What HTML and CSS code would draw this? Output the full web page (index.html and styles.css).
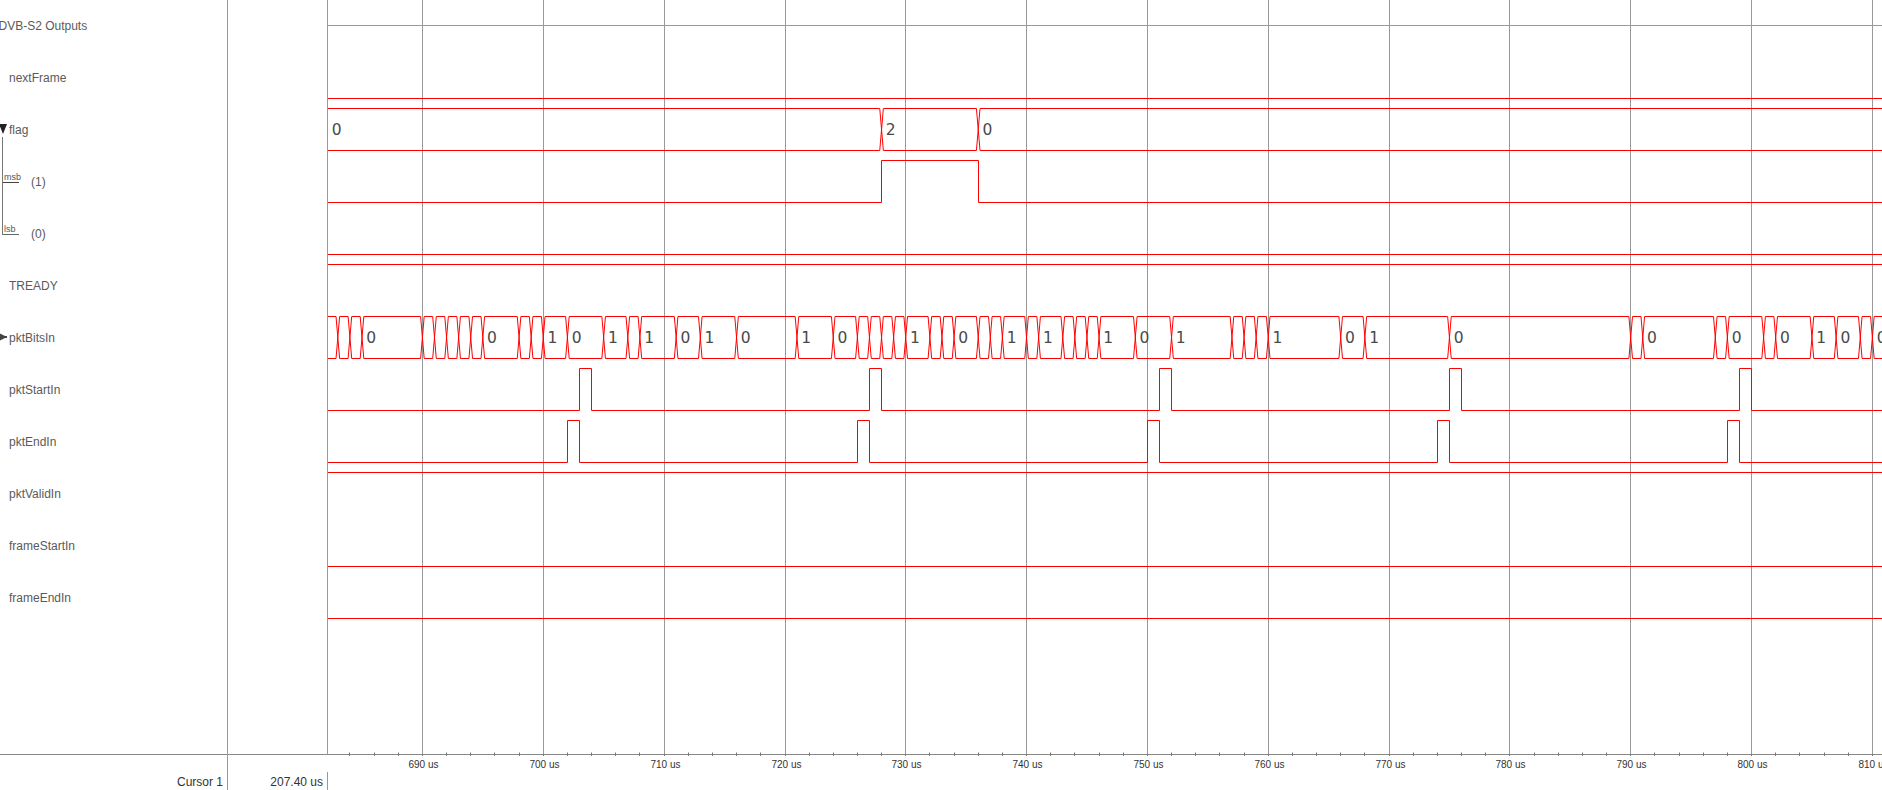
FILE: index.html
```html
<!DOCTYPE html>
<html lang="en">
<head>
<meta charset="utf-8">
<title>Waveform viewer</title>
<link rel="stylesheet" href="styles.css">
</head>
<body>
<div class="viewer">
  <div class="col-names">
    <div class="names">
      <div class="row group"><span class="name">DVB-S2 Outputs</span></div>
      <div class="row"><span class="name">nextFrame</span></div>
      <div class="row">
        <svg class="twisty twisty-open" viewBox="0 0 8 10"><path d="M0 0H8L4 10Z"/></svg>
        <span class="name">flag</span>
      </div>
      <div class="row bit"><span class="name">(1)</span></div>
      <div class="row bit"><span class="name">(0)</span></div>
      <div class="row"><span class="name">TREADY</span></div>
      <div class="row">
        <svg class="twisty twisty-closed" viewBox="0 0 8 8"><path d="M0 0L6 3H8V5H6L0 8Z"/></svg>
        <span class="name">pktBitsIn</span>
      </div>
      <div class="row"><span class="name">pktStartIn</span></div>
      <div class="row"><span class="name">pktEndIn</span></div>
      <div class="row"><span class="name">pktValidIn</span></div>
      <div class="row"><span class="name">frameStartIn</span></div>
      <div class="row"><span class="name">frameEndIn</span></div>
      <div class="tree">
        <div class="branch branch-msb">msb</div>
        <div class="branch branch-lsb">lsb</div>
      </div>
    </div>
    <div class="cursor-name">Cursor 1</div>
  </div>
  <div class="col-values">
    <div class="values"></div>
    <div class="cursor-value">207.40 us</div>
  </div>
  <svg id="wave" class="wave" viewBox="328 0 1554 790" width="1554" height="790"></svg>
</div>
<script src="wave.js"></script>
</body>
</html>
```
FILE: styles.css
```css
html, body {
  margin: 0;
  padding: 0;
  height: 100%;
  background: #fff;
  overflow: hidden;
}
.viewer {
  display: flex;
  height: 790px;
  font-family: "Liberation Sans", Arial, sans-serif;
  font-size: 12px;
}
.col-names {
  width: 228px;
  flex: none;
  display: flex;
  flex-direction: column;
  box-sizing: border-box;
  border-right: 1px solid #999;
}
.names {
  position: relative;
  height: 755px;
  flex: none;
  box-sizing: border-box;
  border-bottom: 1px solid #888;
  overflow: hidden;
}
.row {
  display: flex;
  align-items: center;
  height: 52px;
  padding-left: 9px;
  position: relative;
  color: #5a5a5a;
  white-space: nowrap;
}
.group { padding-left: 0; }
.group .name { margin-left: -1.5px; }
.bit { padding-left: 31px; }
.twisty {
  position: absolute;
  left: -1px;
}
.twisty-open { width: 8px; height: 10px; top: 20px; fill: #222; }
.twisty-closed { width: 8px; height: 8px; top: 21px; fill: #444; }
.tree {
  position: absolute;
  left: 2px;
  top: 137px;
  width: 16px;
  display: flex;
  flex-direction: column;
  border-left: 1px solid #777;
  font-size: 9px;
  color: #555;
}
.branch {
  display: flex;
  align-items: flex-end;
  box-sizing: border-box;
  padding-left: 1px;
  line-height: 9px;
}
.branch-msb { height: 46px; border-bottom: 1px solid #444; }
.branch-lsb { height: 52px; border-bottom: 1px solid #666; }
.cursor-name {
  margin-top: auto;
  height: 18px;
  line-height: 20px;
  text-align: right;
  padding-right: 4px;
  color: #333;
}
.col-values {
  width: 100px;
  flex: none;
  display: flex;
  flex-direction: column;
}
.values {
  height: 755px;
  flex: none;
  box-sizing: border-box;
  border-right: 1px solid #999;
  border-bottom: 1px solid #888;
}
.cursor-value {
  margin-top: auto;
  height: 18px;
  line-height: 20px;
  box-sizing: border-box;
  border-right: 1px solid #999;
  text-align: right;
  padding-right: 4px;
  color: #333;
}
.wave {
  flex: none;
  display: block;
}
.grid { stroke: #999; stroke-width: 1; fill: none; }
.axis-line { stroke: #888; stroke-width: 1; fill: none; }
.tick { stroke: #777; stroke-width: 1; fill: none; }
.sig { stroke: #f00; stroke-width: 1; fill: none; }
.bus-text {
  font-family: "DejaVu Sans", sans-serif;
  font-size: 15.5px;
  fill: #4a4a4a;
}
.time-text {
  font-family: "Liberation Sans", Arial, sans-serif;
  font-size: 10px;
  fill: #333;
  text-anchor: middle;
}
```
FILE: wave.js
```js
(function () {
  var NS = 'http://www.w3.org/2000/svg';
  var svg = document.getElementById('wave');
  var LEFT = 327.5, RIGHT = 1882;
  var ORIGIN = 422.4, UNIT = 12.083; // x of 690 us, pixels per us
  var HALF = 1.8;                     // half width of a bus transition

  function el(name, cls, attrs, text) {
    var e = document.createElementNS(NS, name);
    e.setAttribute('class', cls);
    for (var k in attrs) e.setAttribute(k, attrs[k]);
    if (text !== undefined) e.textContent = text;
    svg.appendChild(e);
    return e;
  }
  function path(cls, d) { el('path', cls, { d: d }); }
  function xAt(t) { return ORIGIN + t * UNIT; }
  function snap(x) { return Math.floor(x) + 0.5; }

  // grid and header rule
  var majors = [422, 543, 664, 785, 905, 1026, 1147, 1268, 1389, 1509, 1630, 1751, 1872];
  var d = 'M' + LEFT + ' 25.5H' + RIGHT;
  majors.forEach(function (x) { d += 'M' + (x + 0.5) + ' 0V754'; });
  path('grid', d);

  // axis
  path('axis-line', 'M328 754.5H' + RIGHT);
  var ticks = '';
  for (var t = -6; t <= 120; t += 2) {
    if (t % 10 === 0) {
      ticks += 'M' + (majors[t / 10] + 0.5) + ' 754V756';
    } else {
      ticks += 'M' + snap(xAt(t)) + ' 752.5V756';
    }
  }
  path('tick', ticks);
  majors.forEach(function (x, i) {
    el('text', 'time-text', { x: x + 1.5, y: 768 }, (690 + i * 10) + ' us');
  });

  // flat lines
  [98.5, 254.5, 264.5, 472.5, 566.5, 618.5].forEach(function (y) {
    path('sig', 'M328 ' + y + 'H' + RIGHT);
  });

  // single-bit signals: low baseline, high level, alternating edge times
  function bit(low, high, edges) {
    var s = 'M328 ' + low, y = low;
    edges.forEach(function (t) {
      var x = snap(xAt(t));
      s += 'H' + x;
      y = y === low ? high : low;
      s += 'V' + y;
    });
    path('sig', s + 'H' + RIGHT);
  }
  bit(202.5, 160.5, [38, 46]);
  bit(410.5, 368.5, [13, 14, 37, 38, 61, 62, 85, 86, 109, 110]);
  bit(462.5, 420.5, [12, 13, 36, 37, 60, 61, 84, 85, 108, 109]);

  // buses: transition times, labels keyed by the transition that starts them
  function bus(top, bottom, times, labels, firstLabel) {
    var s = '', from = 328;
    times.forEach(function (t) {
      var c = xAt(t), a = c - HALF, b = c + HALF;
      s += 'M' + from + ' ' + top + 'H' + a + 'L' + b + ' ' + bottom;
      s += 'M' + from + ' ' + bottom + 'H' + a + 'L' + b + ' ' + top;
      from = b;
    });
    s += 'M' + from + ' ' + top + 'H' + RIGHT + 'M' + from + ' ' + bottom + 'H' + RIGHT;
    path('sig', s);
    var base = bottom - 16;
    if (firstLabel) {
      el('text', 'bus-text', { x: 331.8, y: base }, firstLabel);
    }
    Object.keys(labels).forEach(function (t) {
      el('text', 'bus-text', { x: xAt(+t) + 4.3, y: base }, labels[t]);
    });
  }
  bus(108.5, 150.5, [38, 46], { 38: '2', 46: '0' }, '0');
  bus(316.5, 358.5,
    [-7, -6, -5, 0, 1, 2, 3, 4, 5, 8, 9, 10, 12, 15, 17, 18, 21, 23, 26, 31, 34, 36, 37, 38, 39, 40,
     42, 43, 44, 46, 47, 48, 50, 51, 53, 54, 55, 56, 59, 62, 67, 68, 69, 70, 76, 78, 85,
     100, 101, 107, 108, 111, 112, 115, 117, 119, 120],
    { '-5': '0', 5: '0', 10: '1', 12: '0', 15: '1', 18: '1', 21: '0', 23: '1', 26: '0', 31: '1',
      34: '0', 40: '1', 44: '0', 48: '1', 51: '1', 56: '1', 59: '0', 62: '1', 70: '1', 76: '0',
      78: '1', 85: '0', 101: '0', 108: '0', 112: '0', 115: '1', 117: '0', 120: '0' });
})();
```
